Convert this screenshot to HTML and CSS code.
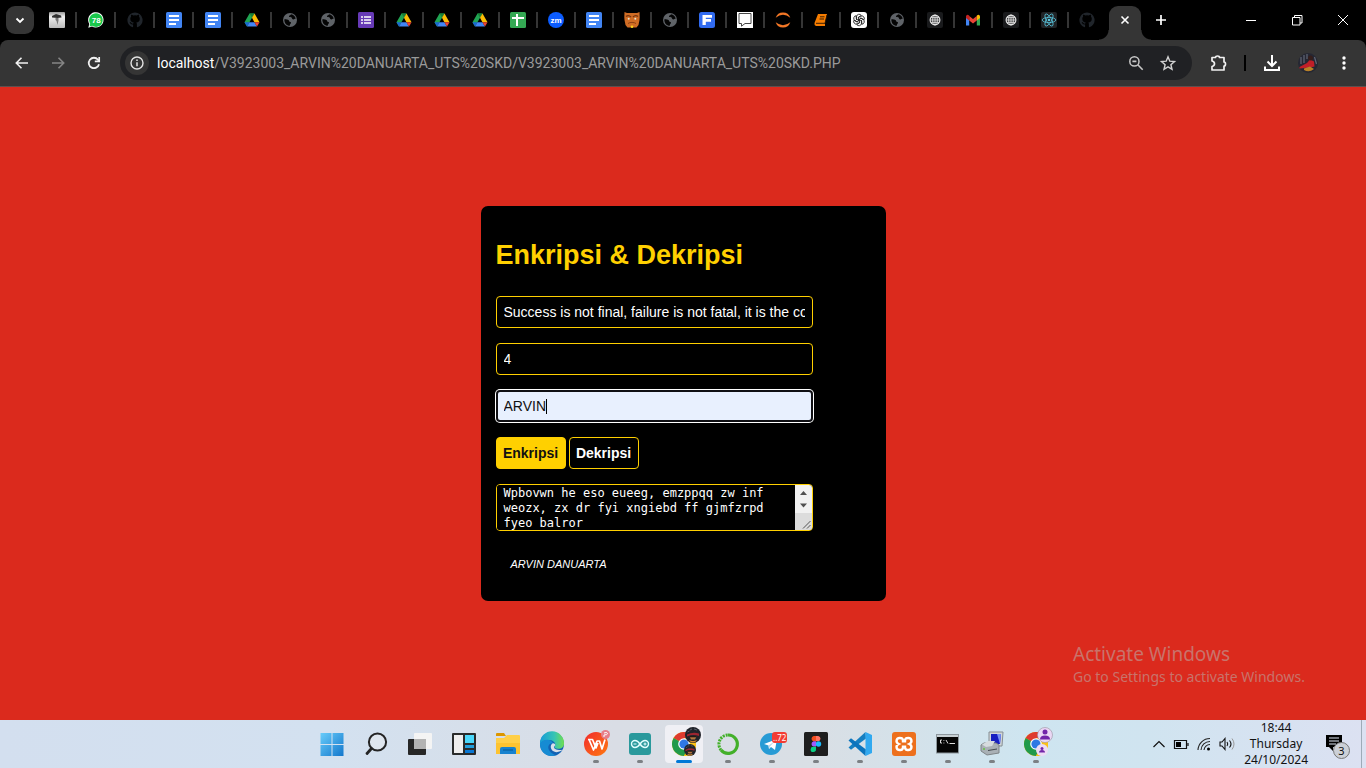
FILE: index.html
```html
<!DOCTYPE html>
<html lang="id">
<head>
<meta charset="utf-8">
<title>Enkripsi &amp; Dekripsi</title>
<link rel="stylesheet" href="styles.css">
</head>
<body>
<svg class="sprite" aria-hidden="true">
  <symbol id="docs" viewBox="0 0 16 16"><rect width="16" height="16" rx="1.5" fill="#4285f4"/><path d="M3 4h10M3 8h10M3 12h7" stroke="#fff" stroke-width="1.9"/></symbol>
  <symbol id="drive" viewBox="0 0 16 16"><path d="M5.5 1.5h5L5.3 10.4 3 14.4.5 10.2z" fill="#20a452"/><path d="M5.5 1.5h5L8 5.8z" fill="#188038"/><path d="M10.5 1.5 15.5 10.2H10.4L8 5.8z" fill="#fbbc04"/><path d="M5.3 10.2h5.1l2.6 4.3H3z" fill="#4285f4"/><path d="M10.4 10.2h5.1L13 14.5z" fill="#ea4335"/><path d="M.5 10.2h4.8L3 14.5z" fill="#1967d2"/></symbol>
  <symbol id="globe" viewBox="0 0 16 16"><circle cx="8" cy="8" r="7" fill="#5f6368"/><path d="M2.400 7.200c2 .1 3.400 0 4.400 1.100.6 1 .3 1.700 1.600 1.800 1 .2.6 1.500-.1 2-.5.5-.4 1.200-.5 1.700C4.600 13.600 2 11 2.400 7.200zM9 2.200c-.3 1.200-1.800.7-1.800 2 0 1.300 2.100.4 2.600 1.500.4 1 .5 1.700 1.600 1.700 1 0 1.200-.7 2.300-.6C13.300 4.300 11.400 2.500 9 2.200z" fill="#050505"/></symbol>
  <symbol id="github" viewBox="0 0 16 16"><path d="M8 .6a7.500 7.500 0 0 0-2.500 14.600c.5 0 .6-.3.600-.6v-2.200c-2.200.4-2.700-.8-2.900-1.400-.3-.6-.8-.9-.8-1 .9-.4 1.700.5 2 1 .6 1 1.400.8 1.900.6 0-.4.200-.8.500-1-2-.3-3.500-1.100-3.500-3.800 0-.9.300-1.500.8-2-.1-.4-.3-1.200.1-2 .9 0 1.700.5 2.100.8a7 7 0 0 1 3.500 0c.4-.3 1.200-.8 2.100-.8.4.8.2 1.600.1 2 .5.5.8 1.100.8 2 0 2.700-1.500 3.500-3.500 3.800.4.300.6.900.6 1.700v2.300c0 .3.100.6.600.6A7.500 7.500 0 0 0 8 .6z" fill="#20252b"/></symbol>
  <symbol id="wire" viewBox="0 0 16 16"><rect width="16" height="16" rx="2" fill="#191a1c"/><circle cx="8" cy="8" r="4.900" fill="none" stroke="#e8e8e8" stroke-width="1.100"/><path d="M8 3v10M3 8h10M3.900 5.700h8.200M3.900 10.300h8.200" stroke="#e8e8e8" stroke-width=".9"/><ellipse cx="8" cy="8" rx="2.300" ry="4.900" fill="none" stroke="#e8e8e8" stroke-width=".9"/></symbol>
  <symbol id="chrome" viewBox="0 0 24 24"><circle cx="12" cy="12" r="12" fill="#fbc116"/><path d="M12 12 1.600 6A12 12 0 0 1 22.400 6z" fill="#de3b2f"/><path d="M1.600 6a12 12 0 0 0 10.300 18L17 15 12 12z" fill="#219a4b"/><path d="M22.400 6H12v6l5 3-5 9a12 12 0 0 0 10.400-18z" fill="#fbc116"/><circle cx="12" cy="12" r="5.800" fill="#fff"/><circle cx="12" cy="12" r="4.600" fill="#2f78e4"/></symbol>
  <symbol id="figure" viewBox="0 0 16 16"><circle cx="8" cy="8" r="8" fill="#20232a"/><path d="M2 7.500q6-3 12-1v2.500q-6-2-12 .5z" fill="#9d2530"/><path d="M4.500 9.500h7l-1.500 3H6z" fill="#b3763f"/><path d="M4.500 9h7v1.300h-7z" fill="#231815"/><path d="M4 13q4 2 8 0-1.500 2.500-4 2.600T4 13z" fill="#db902f"/><path d="M5 3l2-1M2.500 5l2-1M9 2l3 1" stroke="#565b67"/></symbol>
</svg>

<header>
  <nav class="tabs" aria-label="Tab browser">
    <button class="tab-menu" aria-label="Cari tab"><svg width="10" height="10" viewBox="0 0 10 10"><path d="M1.500 3.500 5 7 8.500 3.500" fill="none" stroke="#fff" stroke-width="1.800"/></svg></button>
    <div class="tab-list">
      <button class="tab" aria-label="Tab 1"><svg viewBox="0 0 16 16"><defs><linearGradient id="t1" x2="0" y2="1"><stop stop-color="#999"/><stop offset=".3" stop-color="#eee"/><stop offset="1" stop-color="#bbb"/></linearGradient></defs><rect width="16" height="16" rx="1" fill="url(#t1)"/><path d="M3 4l4-2 5 1.500.5 2-4 .5L3 5.500z" fill="#303030"/><path d="M6.500 6h3v2.500L8.500 13 7.500 9l-1-1z" fill="#777"/></svg></button>
      <button class="tab" aria-label="WhatsApp"><svg viewBox="0 0 16 16"><path d="M.3 15.700 1.300 12A7.700 7.700 0 1 1 4 14.600z" fill="#fff"/><path d="M1.600 14.500 2.200 11.800A6.800 6.800 0 1 1 4.200 13.800z" fill="#19c84b"/><text x="8.200" y="10.600" class="n78">78</text></svg></button>
      <button class="tab" aria-label="GitHub"><svg><use href="#github"/></svg></button>
      <button class="tab" aria-label="Docs"><svg><use href="#docs"/></svg></button>
      <button class="tab" aria-label="Docs"><svg><use href="#docs"/></svg></button>
      <button class="tab" aria-label="Drive"><svg><use href="#drive"/></svg></button>
      <button class="tab" aria-label="Situs"><svg><use href="#globe"/></svg></button>
      <button class="tab" aria-label="Situs"><svg><use href="#globe"/></svg></button>
      <button class="tab" aria-label="Forms"><svg viewBox="0 0 16 16"><rect width="16" height="16" rx="1.500" fill="#673ab7"/><path d="M3 5h2M3 8h2M3 11h2M6 5h7M6 8h7M6 11h7" stroke="#fff" stroke-width="1.700"/></svg></button>
      <button class="tab" aria-label="Drive"><svg><use href="#drive"/></svg></button>
      <button class="tab" aria-label="Drive"><svg><use href="#drive"/></svg></button>
      <button class="tab" aria-label="Drive"><svg><use href="#drive"/></svg></button>
      <button class="tab" aria-label="Sheets"><svg viewBox="0 0 16 16"><rect width="16" height="16" rx="1.500" fill="#34a853"/><path d="M2 6h12M7 2v12" stroke="#fff" stroke-width="2"/></svg></button>
      <button class="tab" aria-label="Zoom"><svg viewBox="0 0 16 16"><circle cx="8" cy="8" r="8" fill="#0b5cff"/><text x="8" y="10.600" class="zm">zm</text></svg></button>
      <button class="tab" aria-label="Docs"><svg><use href="#docs"/></svg></button>
      <button class="tab" aria-label="Tab 16"><svg viewBox="0 0 16 16"><path d="M.5 0 3 1h10L15.500 0l.2 5-.2 3-1 5-2 2.500h-9L1.500 13 .5 8 .3 5z" fill="#cf6c24"/><path d="M2 4.500c2-1.500 4-.5 5 .5M9 5c1-1 3-2 5-.5" stroke="#74340f" stroke-width="1.400" fill="none"/><circle cx="4.700" cy="6.800" r="1" fill="#e9e3cf"/><circle cx="11.300" cy="6.800" r="1" fill="#e9e3cf"/><path d="M4 11.500c2-1.500 6-1.500 8 0" stroke="#8b4012" fill="none"/><circle cx="8" cy="14.800" r="1.300" fill="#f5d21c"/></svg></button>
      <button class="tab" aria-label="Situs"><svg><use href="#globe"/></svg></button>
      <button class="tab" aria-label="Tab 18"><svg viewBox="0 0 16 16"><rect width="16" height="16" rx="2.500" fill="#316bf0"/><path d="M3.500 3h9.500v2.700H6.800v1.400H12v2.700H6.800V13H3.500z" fill="#fff"/></svg></button>
      <button class="tab" aria-label="Chat"><svg viewBox="0 0 16 16"><rect width="16" height="16" fill="#fff"/><path d="M2 1.500h12v10H8L4.500 14.200V11.500H2z" fill="none" stroke="#333" stroke-width=".9"/></svg></button>
      <button class="tab" aria-label="Jupyter"><svg viewBox="0 0 16 16"><path d="M.7 5.700a7.700 7.700 0 0 1 14.600 0Q8-.1.700 5.700zM.7 10.300a7.700 7.700 0 0 0 14.600 0Q8 16.100.7 10.300z" fill="#f37726"/></svg></button>
      <button class="tab" aria-label="Buku"><svg viewBox="0 0 16 16"><path d="M5 2h9l-2 8.500v3.500H3q-2-.5-1.500-3z" fill="#f57c00"/><path d="M7 4.800h4.500M6.500 7h4.500M3 11.300h9L14 3" stroke="#251200" stroke-width=".9" fill="none"/></svg></button>
      <button class="tab" aria-label="ChatGPT"><svg viewBox="0 0 16 16"><rect width="16" height="16" rx="3" fill="#fff"/><g fill="none" stroke="#222" stroke-width=".85"><path id="petal" d="M5.500 8V4.700a2.600 2.600 0 0 1 4.800-1.200L7.500 5.200v3.600"/><use href="#petal" transform="rotate(60 8 8)"/><use href="#petal" transform="rotate(120 8 8)"/><use href="#petal" transform="rotate(180 8 8)"/><use href="#petal" transform="rotate(240 8 8)"/><use href="#petal" transform="rotate(300 8 8)"/></g></svg></button>
      <button class="tab" aria-label="Situs"><svg><use href="#globe"/></svg></button>
      <button class="tab" aria-label="Web"><svg><use href="#wire"/></svg></button>
      <button class="tab" aria-label="Gmail"><svg viewBox="0 0 16 16"><path d="M1 4v9.500h3.200V7z" fill="#4285f4"/><path d="M15 4v9.500h-3.200V7z" fill="#34a853"/><path d="M4.200 8.500V4L8 7l3.800-3v4.500L8 11.500z" fill="#ea4335"/><path d="M1 4.500Q1.500 1.500 4.200 3.500v5L1 6z" fill="#c5221f"/><path d="M15 4.500Q14.500 1.500 11.800 3.500v5L15 6z" fill="#fbbc04"/></svg></button>
      <button class="tab" aria-label="Web"><svg><use href="#wire"/></svg></button>
      <button class="tab" aria-label="React"><svg viewBox="0 0 16 16"><rect width="16" height="16" rx="2" fill="#202326"/><g fill="none" stroke="#58c4dc" stroke-width=".8"><ellipse cx="8" cy="8" rx="6.800" ry="2.600"/><ellipse cx="8" cy="8" rx="6.800" ry="2.600" transform="rotate(60 8 8)"/><ellipse cx="8" cy="8" rx="6.800" ry="2.600" transform="rotate(120 8 8)"/></g><circle cx="8" cy="8" r="1.300" fill="#58c4dc"/></svg></button>
      <button class="tab" aria-label="GitHub"><svg><use href="#github"/></svg></button>
    </div>
    <button class="tab-active" aria-label="Tutup tab"><svg width="10" height="10" viewBox="0 0 10 10"><path d="M1.500 1.500l7 7M8.500 1.500l-7 7" stroke="#fff" stroke-width="1.600"/></svg></button>
    <button class="tab-new" aria-label="Tab baru"><svg width="12" height="12" viewBox="0 0 12 12"><path d="M6 1v10M1 6h10" stroke="#fff" stroke-width="1.700"/></svg></button>
    <div class="window-buttons">
      <button aria-label="Minimalkan"><svg width="10" height="10"><path d="M0 5.500h10" stroke="#fff"/></svg></button>
      <button aria-label="Pulihkan"><svg width="11" height="11"><path d="M.5 2.500h7.500v7.500H.500zM2.500 2.500V.500h7.500V8H8" fill="none" stroke="#fff"/></svg></button>
      <button aria-label="Tutup"><svg width="10" height="10"><path d="M0 0l10 10M10 0 0 10" stroke="#fff"/></svg></button>
    </div>
  </nav>
  <div class="toolbar">
    <button class="tool" aria-label="Kembali"><svg width="16" height="16" viewBox="0 0 16 16"><path d="M14 8H2.800M7.500 2.800 2.300 8l5.200 5.200" fill="none" stroke="#f1f1f1" stroke-width="1.600"/></svg></button>
    <button class="tool" aria-label="Maju"><svg width="16" height="16" viewBox="0 0 16 16"><path d="M2 8h11.200M8.500 2.800 13.700 8l-5.200 5.200" fill="none" stroke="#858585" stroke-width="1.600"/></svg></button>
    <button class="tool" aria-label="Muat ulang"><svg width="16" height="16" viewBox="0 0 16 16"><path d="M13 9.200A5.200 5.200 0 1 1 12 4.700l1 1.200" fill="none" stroke="#f1f1f1" stroke-width="1.800"/><path d="M13.200 2v4.400H8.800" fill="none" stroke="#f1f1f1" stroke-width="1.700"/></svg></button>
    <div class="address">
      <span class="info"><svg width="14" height="14" viewBox="0 0 14 14"><circle cx="7" cy="7" r="6" fill="none" stroke="#e3e3e3" stroke-width="1.400"/><path d="M7 6.200v4M7 3.400v1.500" stroke="#e3e3e3" stroke-width="1.500"/></svg></span>
      <span class="url"><b>localhost</b>/V3923003_ARVIN%20DANUARTA_UTS%20SKD/V3923003_ARVIN%20DANUARTA_UTS%20SKD.PHP</span>
      <button class="tool small" aria-label="Zoom"><svg width="16" height="16" viewBox="0 0 16 16"><circle cx="6.400" cy="6.400" r="4.600" fill="none" stroke="#c7c7c7" stroke-width="1.500"/><path d="M4.400 6.400h4M9.800 9.800l4.900 4.900" stroke="#c7c7c7" stroke-width="1.600"/></svg></button>
      <button class="tool small" aria-label="Bookmark"><svg width="16" height="16" viewBox="0 0 16 16"><path d="M8 1.800l1.800 4.400 4.700.4-3.600 3.100 1.100 4.600L8 11.800l-4 2.500 1.100-4.600-3.600-3.100 4.700-.4z" fill="none" stroke="#d2d2d2" stroke-width="1.400"/></svg></button>
    </div>
    <button class="tool ext" aria-label="Ekstensi"><svg width="18" height="18" viewBox="0 0 18 18"><path d="M3 3.500h3.500a2 1.500 0 0 1 4 0H15v4.500a1.500 2 0 0 1 0 4V16H3v-3.500q2.500-.5 2.500-2.700T3 7z" fill="none" stroke="#f1f1f1" stroke-width="1.700" stroke-linejoin="round"/></svg></button>
    <span class="divider"></span>
    <button class="tool" aria-label="Unduhan"><svg width="18" height="18" viewBox="0 0 18 18"><path d="M9 1v10.500M4.500 7.500 9 12l4.500-4.500M2 12.500V16h14v-3.500" fill="none" stroke="#fff" stroke-width="2"/></svg></button>
    <button class="tool" aria-label="Profil"><svg width="20" height="20" viewBox="0 0 20 20"><circle cx="10" cy="10" r="10" fill="#252733"/><path d="M3 4v7M6 2v8M9 1v5M16.500 4l2 7" stroke="#626775" stroke-width="1.200"/><path d="M1.500 14 9 10l3-3.500 4 2 .5 5-4 1-11 1z" fill="#c01f28"/><circle cx="12.500" cy="5" r="2.500" fill="#361e1b"/><path d="M6 15.500l6-2 4 2.500q-5 4-10 1z" fill="#b98227"/></svg></button>
    <button class="tool" aria-label="Menu"><svg width="4" height="16"><g fill="#fff"><circle cx="2" cy="3" r="1.700"/><circle cx="2" cy="8" r="1.700"/><circle cx="2" cy="13" r="1.700"/></g></svg></button>
  </div>
</header>

<main>
  <form class="card" onsubmit="return false">
    <h1>Enkripsi &amp; Dekripsi</h1>
    <input class="field" type="text" aria-label="Teks" value="Success is not final, failure is not fatal, it is the courage to continue that counts">
    <input class="field" type="text" aria-label="Geser" value="4">
    <div class="key"><input class="field focused" type="text" aria-label="Kunci" value="ARVIN"><span class="caret"></span></div>
    <div class="actions">
      <button class="btn primary">Enkripsi</button>
      <button class="btn">Dekripsi</button>
    </div>
    <div class="result">
      <textarea aria-label="Hasil">Wpbovwn he eso eueeg, emzppqq zw inf weozx, zx dr fyi xngiebd ff gjmfzrpd fyeo balror</textarea>
      <div class="scroll">
        <svg width="17" height="28" viewBox="0 0 17 28"><path d="M5 10 8.500 6 12 10zM5 18.500l3.500 4 3.500-4z" fill="#505050"/></svg>
        <svg class="grip" width="17" height="17" viewBox="0 0 17 17"><path d="M8 15.500 15.500 8M12 15.500l3.500-3.500" stroke="#555"/></svg>
      </div>
    </div>
    <p class="author">ARVIN DANUARTA</p>
  </form>
  <aside class="activate">
    <p class="activate-title">Activate Windows</p>
    <p>Go to Settings to activate Windows.</p>
  </aside>
</main>

<footer class="taskbar">
  <div class="apps">
    <button class="app" aria-label="Mulai"><svg viewBox="0 0 24 24"><defs><linearGradient id="win" x2="1" y2="1"><stop stop-color="#68ccfa"/><stop offset="1" stop-color="#1377cc"/></linearGradient></defs><path d="M.5 1h11v11H.5zM12.500 1h11v11h-11zM.5 13h11v11H.5zM12.500 13h11v11h-11z" fill="url(#win)"/></svg></button>
    <button class="app" aria-label="Cari"><svg viewBox="0 0 24 24"><circle cx="13.500" cy="10" r="8.600" fill="#dfe6ee" stroke="#242424" stroke-width="2"/><path d="M7.500 16.500 3 21.500" stroke="#242424" stroke-width="2.800" stroke-linecap="round"/></svg></button>
    <button class="app" aria-label="Tampilan tugas"><svg viewBox="0 0 24 24"><rect y="7" width="18" height="16" rx="1" fill="#272727"/><rect x="6" y="1" width="18" height="16" rx="1" fill="#f4f4f4"/><path d="M6 7h12v10H6z" fill="#b3b3b3"/></svg></button>
    <button class="app" aria-label="Widget"><svg viewBox="0 0 24 24"><rect y="1" width="24" height="22" rx="1" fill="#292b2b"/><path d="M2 3h9v18H2z" fill="#eee"/><path d="M13 3h9v8h-9z" fill="#4bd8fb"/><path d="M13 13h9v3h-9z" fill="#229fdd"/><path d="M13 18h9v3h-9z" fill="#0a78d3"/></svg></button>
    <button class="app" aria-label="File Explorer"><svg viewBox="0 0 24 24"><path d="M0 2q0-1 1-1h7l2 3H0z" fill="#dc9600"/><path d="M0 6h8l3-3h12q1 0 1 1v18H0z" fill="#ffcf48"/><path d="M0 11h24v11H0z" fill="#fdc330"/><path d="M4 22v-5q0-2 2-2h12q2 0 2 2v5z" fill="#1782cf"/><path d="M7 18h10" stroke="#075894"/></svg></button>
    <button class="app" aria-label="Edge"><svg viewBox="0 0 24 24"><defs><linearGradient id="edge"><stop stop-color="#179bd7"/><stop offset=".6" stop-color="#36c4b4"/><stop offset="1" stop-color="#70df4e"/></linearGradient></defs><circle cx="12" cy="12" r="12" fill="#1262b4"/><path d="M0 11A12 12 0 0 1 24 11.500c0 4-3 5.500-6.500 5.300-3.500-.1-3.500-2-2.300-3.200C16 10 12 8 8.500 8 4 8 1 10 0 13z" fill="url(#edge)"/><path d="M0 12c2-5 11-6 13-.8-4-.2-6 3.300-3.700 7.300 2 3 5.200 4.300 6.700 4.800C7 26 0 20 0 12z" fill="#168bd3"/><path d="M13 11.200c-3 1-3.300 6.300 1 8.400 3.500 1.600 7-.5 9-2-.5.3-2 .8-5.500.2-3.500-.6-4.500-2.800-2.300-4.300.4-1-.5-2.100-2.200-2.300z" fill="#d8dfe9"/></svg></button>
    <button class="app running" aria-label="WPS"><svg viewBox="0 0 24 24"><defs><linearGradient id="wps" x2="1" y2="1"><stop stop-color="#f12b2e"/><stop offset="1" stop-color="#ff7a10"/></linearGradient></defs><circle cx="12" cy="12" r="12" fill="url(#wps)"/><path d="M4 7.500h4.500L12 16l2-5M5 7.500 9.500 18 13 9h2.500L18 17l3-9.500" fill="none" stroke="#fff" stroke-width="1.700" stroke-linejoin="round"/><circle cx="21.500" cy="2.500" r="4.500" fill="#e77e88"/><path d="M20 1q3.500-1.500 3.500.8 0 1-3.500 1.200V5" stroke="#fff" fill="none"/></svg></button>
    <button class="app running" aria-label="Arduino"><svg viewBox="0 0 24 24"><rect x="1" y="1" width="22" height="22" rx="3" fill="#2a999c"/><path d="M12 12C10 9 8.500 8.500 7 8.500a3.500 3.500 0 0 0 0 7c1.500 0 3-.5 5-3.500s3.500-3.500 5-3.500a3.500 3.500 0 0 1 0 7c-1.500 0-3-.5-5-3.500z" fill="none" stroke="#e4ffff" stroke-width="1.400"/><path d="M5.500 12h3M15.500 12h3M17 10.500v3" stroke="#e4ffff"/></svg></button>
    <button class="app running current" aria-label="Chrome"><svg viewBox="0 0 24 24"><use href="#chrome" width="24" height="24"/><use href="#figure" x="13" y="-5" width="16" height="16"/><use href="#figure" x="12" y="12" width="12" height="12"/></svg></button>
    <button class="app running" aria-label="Anaconda"><svg viewBox="0 0 24 24"><path d="M12 3a9.200 9.200 0 1 1-7 15" fill="none" stroke="#43b02a" stroke-width="3.200"/><path d="M5 18A9.200 9.200 0 0 1 12 3" fill="none" stroke="#43b02a" stroke-width="3" stroke-dasharray="2 1"/></svg></button>
    <button class="app running" aria-label="Telegram"><svg viewBox="0 0 24 24"><circle cx="11" cy="12" r="11" fill="#279bd5"/><path d="M4 12 17 7l-2 11-4-3-2 2-.5-3.500z" fill="#fff"/><path d="M8.500 13.500 15 9l-5 5.500L9 17z" fill="#bfd9ec"/></svg><span class="badge">..72</span></button>
    <button class="app running" aria-label="Figma"><svg viewBox="0 0 24 24"><rect width="24" height="24" rx="1.500" fill="#1e1e1e"/><path d="M12 4H9.700a2.700 2.700 0 0 0 0 5.300H12z" fill="#f24e1e"/><path d="M12 4h2.300a2.700 2.700 0 0 1 0 5.300H12z" fill="#ff7262"/><path d="M12 9.300H9.700a2.700 2.700 0 0 0 0 5.300H12z" fill="#a259ff"/><circle cx="14.500" cy="12" r="2.700" fill="#1abcfe"/><path d="M12 14.700H9.700a2.700 2.700 0 1 0 2.300 2.600z" fill="#0acf83"/></svg></button>
    <button class="app running" aria-label="VS Code"><svg viewBox="0 0 24 24"><path d="M17.500 0 .5 15.500l2.500 2.200L18 6.500z" fill="#167fc1"/><path d="M3 6.300.5 8.500 17.500 24l.5-6.500z" fill="#0b74bd"/><path d="M17.500 0 24 3v18l-6.500 3z" fill="#30a9f0"/></svg></button>
    <button class="app running" aria-label="XAMPP"><svg viewBox="0 0 24 24"><rect width="24" height="24" rx="3" fill="#ed701d"/><path d="M9.500 6.200c-6-1.200-6 4.300-2.800 5.800-3.200 1.500-3.200 7 2.800 5.800 1-.3 1.500-1.300 1.500-3h2c0 1.700.5 2.700 1.500 3 6 1.200 6-4.300 2.800-5.800 3.200-1.500 3.200-7-2.800-5.800-1 .3-1.500 1.300-1.500 3h-2c0-1.700-.5-2.700-1.500-3z" fill="none" stroke="#fff" stroke-width="2.400"/></svg></button>
    <button class="app running" aria-label="Command Prompt"><svg viewBox="0 0 24 24"><rect x=".5" y="2.500" width="22" height="18.500" fill="#050505" stroke="#8d979d"/><path d="M1 4h21" stroke="#c8d0d4" stroke-width="2"/><path d="M6 8H4.500v3H6M7.500 8.500h.8M7.500 11h.8M10 8l2 3.500M13.500 11.500H19" stroke="#ddd" fill="none"/></svg></button>
    <button class="app running" aria-label="PuTTY"><svg viewBox="0 0 24 24"><path d="M9 0h14l-1 14H9z" fill="#d2d7d9" stroke="#868e93"/><path d="M11 2h10l-1 10h-9z" fill="#171fc1"/><path d="M17 2h4l-1 10z" fill="#7892f3"/><path d="M1 13l3-2h12l3 2v8l-12 2-6-4z" fill="#a9b0b5" stroke="#7e8487"/><path d="M2 12.500 8 9h7l-3 5-6 1z" fill="#d6dbde"/><path d="M8 18.500l9-1.500" stroke="#454b50"/><circle cx="4" cy="17" r="1" fill="#63c63f"/></svg></button>
    <button class="app running" aria-label="Chrome tamu"><svg viewBox="0 0 24 24"><use href="#chrome" width="24" height="24"/><circle cx="21" cy="3" r="7.500" fill="#ead7f4" stroke="#9a91a0" stroke-width=".6"/><circle cx="21" cy="0" r="2.500" fill="#7224a9"/><path d="M16 7.500q0-4 5-4t5 4z" fill="#7224a9"/><circle cx="18" cy="18" r="6" fill="#eddcf5"/><circle cx="18" cy="16.500" r="1.500" fill="#7224a9"/><path d="M15 20.500q0-2.500 3-2.500t3 2.500z" fill="#7224a9"/></svg></button>
  </div>
  <div class="tray">
    <button aria-label="Ikon tersembunyi"><svg width="12" height="12"><path d="M.5 9 6 3.500 11.500 9" fill="none" stroke="#111" stroke-width="1.200"/></svg></button>
    <button aria-label="Baterai"><svg width="16" height="12"><path d="M1.500 2.500h12v8h-12zM15 5v3" fill="none" stroke="#111" stroke-width="1.200"/><path d="M3 4h5v5H3z"/></svg></button>
    <button aria-label="Wi-Fi"><svg width="14" height="14"><path d="M1 13A12 12 0 0 1 13 1.500M4 13a9 9 0 0 1 9-8.500M7 13a6 6 0 0 1 6-5.500" fill="none" stroke="#222" stroke-width="1.100"/><circle cx="11.500" cy="12" r="1.500"/></svg></button>
    <button aria-label="Suara"><svg width="17" height="14"><path d="M1 5h2l3-3.500v11L3 9H1z" fill="none" stroke="#111" stroke-width="1.100"/><path d="M8 5q1.500 2 0 4M10.500 3.500q3 3.500 0 7" fill="none" stroke="#111" stroke-width="1.100"/><path d="M13 1.500q4 5.500 0 11" fill="none" stroke="#999"/></svg></button>
    <time class="clock">18:44<br>Thursday<br>24/10/2024</time>
    <button class="notify" aria-label="Notifikasi"><svg width="26" height="26" viewBox="0 0 26 26"><path d="M1 1h16v12H8v4l-4-4H1z"/><path d="M4 4h10M4 7h10M4 10h7" stroke="#dce4f2"/><circle cx="16.500" cy="16.500" r="8" fill="#ccd0d7" stroke="#777"/><text x="16.500" y="20.500" class="count">3</text></svg></button>
  </div>
</footer>
</body>
</html>
```
FILE: styles.css
```css
* { box-sizing: border-box; }
body {
  margin: 0;
  min-height: 100vh;
  display: flex;
  flex-direction: column;
  background: #db2a1d;
  font-family: "Liberation Sans", Arial, sans-serif;
}
button { border: 0; padding: 0; margin: 0; background: none; font: inherit; color: inherit; }
p { margin: 0; }
svg { display: block; flex: none; overflow: visible; }
.sprite { position: absolute; width: 0; height: 0; }

header { background: #000; }
.tabs { display: flex; align-items: center; height: 40px; padding-left: 6px; }
.tab-menu { display: grid; place-items: center; width: 28px; height: 28px; border-radius: 9px; background: #353535; }
.tab-list { flex: 1; display: flex; margin: 0 3px; }
.tab { flex: 1; position: relative; display: grid; place-items: center; height: 16px; }
.tab:nth-child(-n+6) { flex: 0 1 39px; }
.tab svg { width: 16px; height: 16px; }
.tab:not(:last-child)::after {
  content: "";
  position: absolute;
  right: -1px;
  top: 0;
  width: 2px;
  height: 16px;
  background: #353535;
}
.n78 { font: bold 8px "Liberation Sans", sans-serif; fill: #fff; text-anchor: middle; }
.zm { font: bold 8px "Liberation Sans", sans-serif; fill: #fff; text-anchor: middle; }
.tab-active {
  position: relative;
  align-self: flex-end;
  display: grid;
  place-items: center;
  width: 32px;
  height: 34px;
  padding-bottom: 6px;
  background: #353535;
  border-radius: 9px 9px 0 0;
}
.tab-active::before, .tab-active::after {
  content: "";
  position: absolute;
  bottom: 0;
  width: 10px;
  height: 10px;
}
.tab-active::before { right: 100%; background: radial-gradient(circle at 0 0, transparent 9px, #353535 10px); }
.tab-active::after { left: 100%; background: radial-gradient(circle at 100% 0, transparent 9px, #353535 10px); }
.tab-new { display: grid; place-items: center; width: 40px; height: 28px; }
.window-buttons { display: flex; margin-left: 47px; }
.window-buttons button { display: grid; place-items: center; width: 46px; height: 40px; }

.toolbar {
  display: flex;
  align-items: center;
  height: 47px;
  padding: 0 4px;
  background: #353535;
  border-bottom: 1px solid #5e4f4e;
  border-radius: 8px 8px 0 0;
}
.tool { display: grid; place-items: center; width: 36px; height: 34px; }
.tool.small { width: 32px; }
.address {
  flex: 1;
  min-width: 0;
  display: flex;
  align-items: center;
  height: 34px;
  margin: 0 8px;
  padding: 0 8px 0 5px;
  border-radius: 17px;
  background: #202124;
}
.info { display: grid; place-items: center; width: 24px; height: 24px; border-radius: 50%; background: #353535; }
.url {
  flex: 1;
  min-width: 0;
  overflow: hidden;
  white-space: nowrap;
  margin-left: 8px;
  font: 14px/20px Roboto, "Noto Sans", sans-serif;
  color: #9a9a9a;
}
.url b { font-weight: 400; color: #fff; }
.ext { margin-right: 8px; }
.divider { width: 2px; height: 16px; margin-right: 8px; background: #000; }

main { position: relative; flex: 1; display: grid; place-items: center; }
.card {
  display: flex;
  flex-direction: column;
  gap: 15px;
  width: 405px;
  max-width: 100%;
  padding: 33px 15px 29px;
  border-radius: 7px;
  background: #000;
  color: #fff;
}
h1 { margin: 0 0 10px; font-size: 27px; line-height: 32px; color: #ffd000; }
.field {
  display: block;
  width: 317px;
  max-width: 100%;
  height: 32px;
  padding: 0 7px;
  border: 1px solid #ffd000;
  border-radius: 4px;
  outline: 0;
  background: #000;
  color: #fff;
  font: 14px/16px "Liberation Sans", Arial, sans-serif;
}
.key { position: relative; }
.focused {
  border: 2px solid #101014;
  padding: 0 6px;
  box-shadow: 0 0 0 1px #fff;
  background: #e8f0fe;
  color: #111;
}
.caret { position: absolute; left: 50px; top: 9px; width: 1px; height: 15px; background: #000; }
.actions { display: flex; gap: 3px; }
.btn {
  width: 70px;
  height: 32px;
  border: 1px solid #ffd000;
  border-radius: 4px;
  font: bold 14px/16px "Liberation Sans", Arial, sans-serif;
}
.primary { background: #ffd000; color: #111; }
.result {
  display: flex;
  width: 317px;
  max-width: 100%;
  height: 47px;
  overflow: hidden;
  border: 1px solid #ffd000;
  border-radius: 4px;
}
textarea {
  flex: 1;
  min-width: 0;
  padding: 1px 7px 0;
  border: 0;
  outline: 0;
  resize: none;
  overflow: hidden;
  background: #000;
  color: #fff;
  font: 12px/15px "DejaVu Sans Mono", monospace;
}
.scroll { width: 17px; background: #f1f1f1; }
.grip { background: #dcdcdc; }
.author { margin: 10px 0 0; padding-left: 15px; font: italic 11px/16px "Liberation Sans", Arial, sans-serif; color: #fff; }
.activate {
  position: absolute;
  right: 57px;
  bottom: 33px;
  width: 236px;
  color: #c9736b;
  font: 14px/20px "Noto Sans", "Open Sans", sans-serif;
  white-space: nowrap;
}
.activate-title { font-size: 19px; line-height: 26px; }

.taskbar {
  display: grid;
  grid-template-columns: 1fr auto 1fr;
  height: 48px;
  background: linear-gradient(90deg, #d3dfef, #d3e1f0 24%, #d9dde5 45%, #d9dfe5 60%, #cee5f0 75%, #d0e4f0 84%, #dce1f2);
}
.apps { grid-column: 2; display: flex; padding-left: 2px; }
.app { position: relative; display: grid; place-items: center; width: 44px; height: 48px; }
.app svg { position: relative; width: 24px; height: 24px; }
.app.running::after {
  content: "";
  position: absolute;
  left: 19px;
  bottom: 5px;
  width: 6px;
  height: 3px;
  border-radius: 2px;
  background: #7c8084;
}
.app.current::before {
  content: "";
  position: absolute;
  inset: 5px 3px;
  border-radius: 4px;
  background: #f0f0f5;
}
.app.current::after { left: 14px; width: 16px; background: #0078d7; }
.badge {
  position: absolute;
  left: 22px;
  top: 12px;
  padding: 0 1px;
  border-radius: 3px;
  background: #f23c34;
  color: #fff;
  font: 8px/11px "Noto Sans", sans-serif;
}
.tray { display: flex; align-items: center; justify-content: flex-end; gap: 8px; border-right: 1px solid #9eabb8; margin-right: 4px; }
.clock { margin-right: 9px; text-align: center; font: 12px/16px "Noto Sans", "Open Sans", sans-serif; color: #111; }
.notify { margin: 6px 10px 0 0; }
.count { font: 11px "Noto Sans", sans-serif; text-anchor: middle; fill: #111; }
```
